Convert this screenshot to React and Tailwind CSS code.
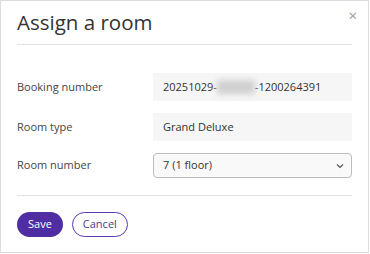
import React from 'react';

const font = { fontFamily: '"Open Sans", "Noto Sans", sans-serif' };

const Row = ({ label, children }) => (
  <div className="flex items-center">
    <div className="w-[136px] text-[11px] text-[#444]">{label}</div>
    <div className="flex-1">{children}</div>
  </div>
);

export default function App() {
  return (
    <div className="w-[370px] h-[254px] bg-white" style={font}>
      <div className="relative w-[369px] h-[253px] border border-[#dcdcdc] bg-white px-[16px]">
        {/* Header */}
        <button className="absolute right-[11px] top-[7px] text-[15px] leading-none text-[#999]">×</button>
        <div className="pt-[8px] pb-[9px] border-b border-[#e0e0e0]">
          <h1 className="text-[20.5px] leading-[26px] text-[#333]">Assign a room</h1>
        </div>

        {/* Form */}
        <div className="pt-[28px] pb-[17px] flex flex-col gap-[12px] border-b border-[#e0e0e0]">
          <Row label="Booking number">
            <div className="h-[28px] bg-[#f6f6f6] flex items-center px-[10px] text-[11px] text-[#333]">
              20251029-
              <span className="inline-block w-[38px] h-[14px] bg-[#cfcfcf] blur-[3px]" />
              -1200264391
            </div>
          </Row>
          <Row label="Room type">
            <div className="h-[28px] bg-[#f6f6f6] flex items-center px-[10px] text-[11px] text-[#333]">
              Grand Deluxe
            </div>
          </Row>
          <Row label="Room number">
            <div className="h-[25px] bg-[#f9f9f9] border border-[#bdbdbd] rounded-[4px] flex items-center justify-between pl-[9px] pr-[7px] text-[11px] text-[#333]">
              <span>7 (1 floor)</span>
              <svg width="8" height="6" viewBox="0 0 8 6" fill="none" stroke="#555" strokeWidth="1.2">
                <path d="M1 1.5 L4 4.5 L7 1.5" />
              </svg>
            </div>
          </Row>
        </div>

        {/* Footer */}
        <div className="pt-[16px] flex gap-[9px]">
          <button className="h-[25px] px-[11px] rounded-full bg-[#4f2ea3] text-white text-[11px]">Save</button>
          <button className="h-[25px] px-[10px] rounded-full border border-[#5a3aae] text-[#4a3a8a] text-[11px] bg-white">Cancel</button>
        </div>
      </div>
    </div>
  );
}
